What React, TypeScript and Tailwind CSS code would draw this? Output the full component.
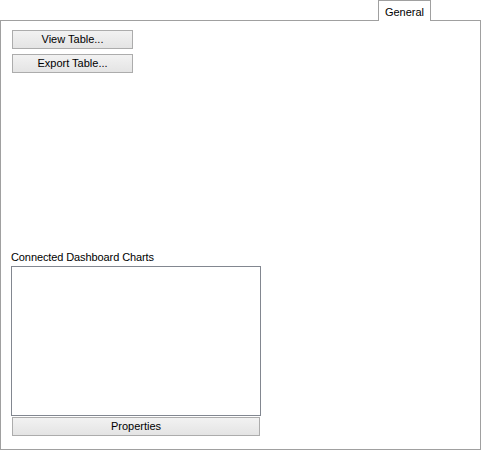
import React from "react";

const font = { fontFamily: '"Liberation Sans", Tahoma, Arial, sans-serif' };

function Btn({ label, className }: { label: string; className: string }) {
  return (
    <div
      className={`flex items-center justify-center border border-[#acacac] bg-gradient-to-b from-[#f2f2f2] to-[#e4e4e4] text-[11px] text-black leading-none ${className}`}
    >
      {label}
    </div>
  );
}

export default function App() {
  return (
    <div className="w-[481px] h-[450px] bg-white text-black" style={font}>
      <div className="flex justify-end pr-[50px] h-[21px]">
        <div className="relative z-10 w-[53px] h-[21px] border border-b-0 border-[#a0a0a0] bg-white flex items-start justify-center pt-[3px] text-[11px]">
          General
        </div>
      </div>
      <div className="relative -mt-px w-[481px] h-[430px] border border-[#a0a0a0] flex flex-col pl-[11px] pt-[9px]">
        <div className="flex flex-col gap-[5px]">
          <Btn label="View Table..." className="w-[121px] h-[19px]" />
          <Btn label="Export Table..." className="w-[121px] h-[19px]" />
        </div>
        <div className="mt-[177px] text-[11px] leading-[14px] -ml-px tracking-[-0.1px]">Connected Dashboard Charts</div>
        <div className="mt-[2px] -ml-px w-[250px] h-[150px] border border-[#828790] bg-white" />
        <Btn label="Properties" className="mt-px w-[248px] h-[19px]" />
      </div>
    </div>
  );
}
